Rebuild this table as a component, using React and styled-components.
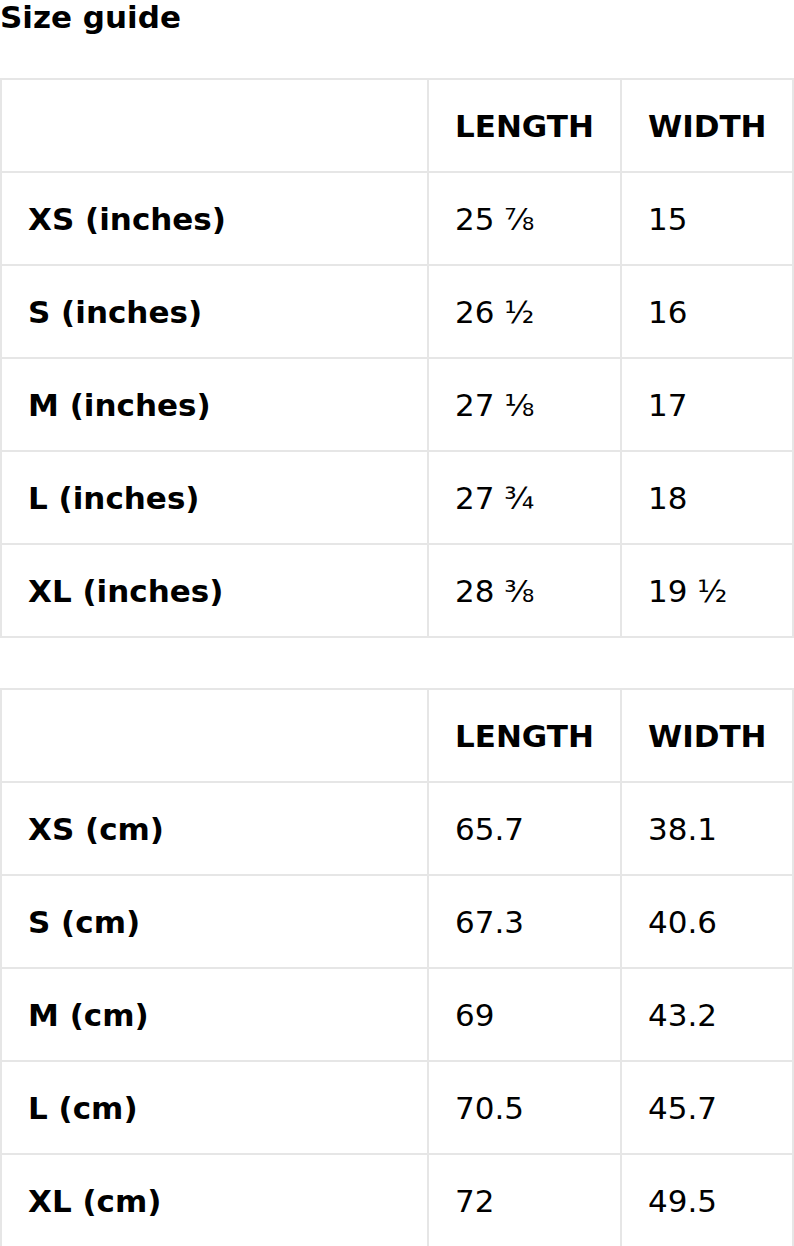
import React from "react";
import styled, { createGlobalStyle } from "styled-components";

const Global = createGlobalStyle`
  html, body { margin: 0; padding: 0; background: #fff; }
  body { font-family: "DejaVu Sans", Verdana, sans-serif; color: #000; }
`;

const Page = styled.div`
  width: 794px;
  display: flex;
  flex-direction: column;
`;

const Title = styled.h2`
  margin: 0 0 43px 0;
  font-size: 31px;
  line-height: 35px;
  font-weight: bold;
`;

const Table = styled.table`
  width: 792px;
  border-collapse: collapse;
  table-layout: fixed;
  margin-bottom: ${(p) => p.$gap || 0}px;
`;

const Cell = styled.td`
  border: 2px solid #e6e6e6;
  height: 91px;
  padding: 0 0 0 26px;
  font-size: 31px;
  line-height: 36px;
  vertical-align: middle;
  font-weight: ${(p) => (p.$bold ? "bold" : "normal")};
  white-space: nowrap;
`;

const Col = styled.col`
  width: ${(p) => p.$w}px;
`;

const inches = [
  ["XS (inches)", "25 ⅞", "15"],
  ["S (inches)", "26 ½", "16"],
  ["M (inches)", "27 ⅛", "17"],
  ["L (inches)", "27 ¾", "18"],
  ["XL (inches)", "28 ⅜", "19 ½"],
];

const cm = [
  ["XS (cm)", "65.7", "38.1"],
  ["S (cm)", "67.3", "40.6"],
  ["M (cm)", "69", "43.2"],
  ["L (cm)", "70.5", "45.7"],
  ["XL (cm)", "72", "49.5"],
];

function SizeTable({ rows, gap }) {
  return (
    <Table $gap={gap}>
      <colgroup>
        <Col $w={427} />
        <Col $w={193} />
        <Col $w={172} />
      </colgroup>
      <tbody>
        <tr>
          <Cell />
          <Cell $bold>LENGTH</Cell>
          <Cell $bold>WIDTH</Cell>
        </tr>
        {rows.map((r) => (
          <tr key={r[0]}>
            <Cell $bold>{r[0]}</Cell>
            <Cell>{r[1]}</Cell>
            <Cell>{r[2]}</Cell>
          </tr>
        ))}
      </tbody>
    </Table>
  );
}

export default function App() {
  return (
    <Page>
      <Global />
      <Title>Size guide</Title>
      <SizeTable rows={inches} gap={50} />
      <SizeTable rows={cm} />
    </Page>
  );
}
